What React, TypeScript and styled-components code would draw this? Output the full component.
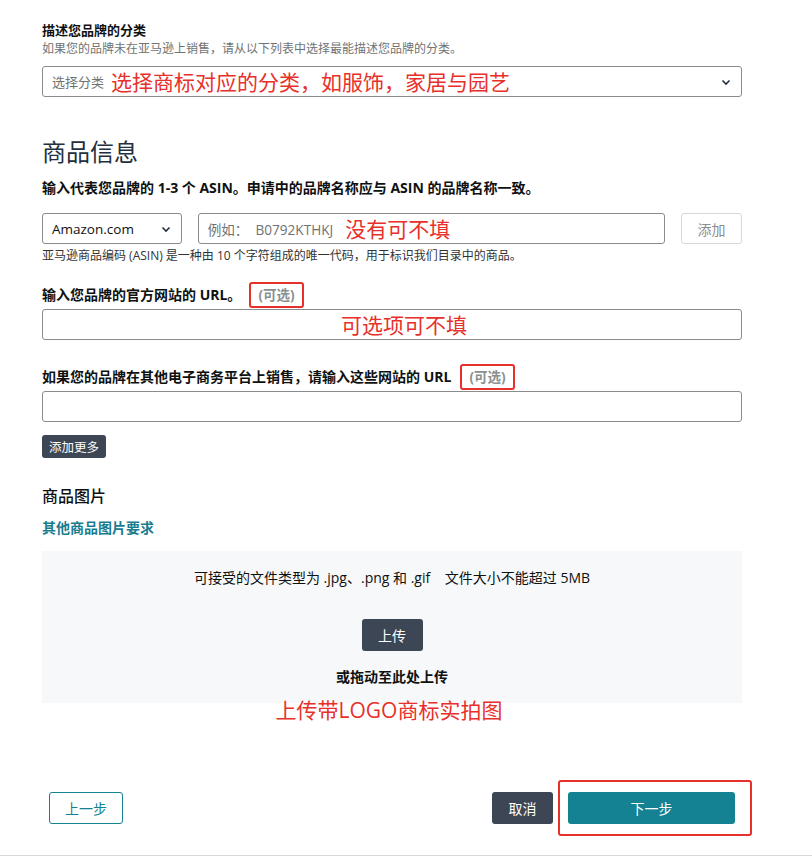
import styled, { createGlobalStyle } from 'styled-components';

const GlobalStyle = createGlobalStyle`
  body {
    margin: 0;
    background: #ffffff;
    font-family: "Open Sans", "Noto Sans CJK SC", sans-serif;
    color: #0f1111;
  }
`;

const Page = styled.div`
  width: 812px;
  height: 856px;
  display: flex;
  flex-direction: column;
  box-sizing: border-box;
`;

const Content = styled.div`
  flex: 1;
  display: flex;
  flex-direction: column;
  width: 700px;
  padding: 21px 0 0 42px;
`;

const FieldLabel = styled.div<{ $top?: number }>`
  display: flex;
  align-items: center;
  margin-top: ${(p) => p.$top ?? 0}px;
  font-size: 14px;
  font-weight: 700;
  line-height: 26px;
  height: 26px;
  color: #0f1111;
  white-space: nowrap;
`;

const SmallTitle = styled.div`
  font-size: 13px;
  font-weight: 700;
  line-height: 19px;
  color: #0f1111;
`;

const Hint = styled.div<{ $top?: number; $dark?: boolean }>`
  margin-top: ${(p) => p.$top ?? 0}px;
  font-size: 12px;
  line-height: 18px;
  color: ${(p) => (p.$dark ? '#333' : '#6f7373')};
  white-space: nowrap;
`;

const Optional = styled.span<{ $gap: number }>`
  margin-left: ${(p) => p.$gap}px;
  padding: 0 7px;
  height: 22px;
  line-height: 22px;
  border: 2px solid #e8302a;
  border-radius: 3px;
  color: #8a9090;
  font-weight: 700;
  font-size: 13.5px;
`;

const Box = styled.div<{ $top?: number; $width?: string }>`
  position: relative;
  display: flex;
  align-items: center;
  box-sizing: border-box;
  width: ${(p) => p.$width ?? '100%'};
  height: 31px;
  margin-top: ${(p) => p.$top ?? 0}px;
  padding: 0 9px;
  border: 1px solid #888c8c;
  border-radius: 3px;
  background: #fff;
  font-size: 13px;
`;

const Placeholder = styled.span<{ $size?: number }>`
  color: #6f7373;
  font-size: ${(p) => p.$size ?? 13}px;
  white-space: pre;
`;

const Value = styled.span`
  color: #0f1111;
  font-size: 13.5px;
`;

const Note = styled.span<{ $left?: number }>`
  margin-left: ${(p) => p.$left ?? 0}px;
  color: #e8302a;
  font-size: 21px;
  line-height: 26px;
  white-space: nowrap;
`;

const Chevron = styled.svg`
  margin-left: auto;
  width: 12px;
  height: 12px;
`;

const Heading = styled.h2`
  margin: 39px 0 0;
  font-size: 24px;
  font-weight: 400;
  line-height: 32px;
  color: #232f3e;
`;

const SubHeading = styled.h3`
  margin: 26px 0 0;
  font-size: 16px;
  font-weight: 500;
  line-height: 24px;
  color: #0f1111;
`;

const AsinRow = styled.div`
  display: flex;
  gap: 16px;
  margin-top: 12px;
`;

const Button = styled.button<{ $variant: 'dark' | 'light' | 'primary' | 'outline'; $size?: number }>`
  box-sizing: border-box;
  display: inline-flex;
  align-items: center;
  justify-content: center;
  border-radius: 3px;
  font-family: inherit;
  font-size: ${(p) => p.$size ?? 14}px;
  padding: 0;
  cursor: pointer;
  white-space: nowrap;
  border: 1px solid
    ${(p) =>
      p.$variant === 'light'
        ? '#d5d9d9'
        : p.$variant === 'outline'
        ? '#148292'
        : 'transparent'};
  background: ${(p) =>
    p.$variant === 'dark'
      ? '#3c4654'
      : p.$variant === 'primary'
      ? '#148292'
      : '#fff'};
  color: ${(p) =>
    p.$variant === 'light'
      ? '#8a8e8e'
      : p.$variant === 'outline'
      ? '#148292'
      : '#fff'};
`;

const LinkText = styled.a`
  margin-top: 11px;
  font-size: 14px;
  font-weight: 700;
  line-height: 18px;
  color: #1a7d8f;
  text-decoration: none;
`;

const DropZone = styled.div`
  display: flex;
  flex-direction: column;
  align-items: center;
  box-sizing: border-box;
  height: 152px;
  margin-top: 14px;
  padding-top: 18px;
  background: #f7f8f9;
  font-size: 14px;
  line-height: 18px;
`;

const DropText = styled.div<{ $bold?: boolean; $top?: number }>`
  margin-top: ${(p) => p.$top ?? 0}px;
  font-weight: ${(p) => (p.$bold ? 700 : 400)};
  color: #0f1111;
  white-space: pre;
`;

const Footer = styled.div`
  display: flex;
  align-items: center;
  margin-top: 69px;
  padding: 0 7px;
`;

const Actions = styled.div`
  margin-left: auto;
  display: flex;
  gap: 15px;
`;

const Highlight = styled.div`
  position: relative;

  &::after {
    content: '';
    position: absolute;
    inset: -12px -17px -12px -10px;
    border: 2px solid #e8302a;
    border-radius: 3px;
  }
`;

const BottomLine = styled.div`
  height: 1px;
  margin-top: 31px;
  background: #d5d9d9;
`;

function Caret() {
  return (
    <Chevron viewBox="0 0 12 12">
      <path d="M2.5 4.5 6 8l3.5-3.5" fill="none" stroke="#232f3e" strokeWidth="1.6" />
    </Chevron>
  );
}

function App() {
  return (
    <Page>
      <GlobalStyle />
      <Content>
        <SmallTitle>描述您品牌的分类</SmallTitle>
        <Hint>如果您的品牌未在亚马逊上销售，请从以下列表中选择最能描述您品牌的分类。</Hint>
        <Box $top={8}>
          <Placeholder>选择分类</Placeholder>
          <Note $left={7}>选择商标对应的分类，如服饰，家居与园艺</Note>
          <Caret />
        </Box>

        <Heading>商品信息</Heading>
        <FieldLabel $top={7}>输入代表您品牌的 1-3 个 ASIN。申请中的品牌名称应与 ASIN 的品牌名称一致。</FieldLabel>
        <AsinRow>
          <Box $width="140px">
            <Value>Amazon.com</Value>
            <Caret />
          </Box>
          <Box $width="469px">
            <Placeholder $size={13.6}>例如：  B0792KTHKJ</Placeholder>
            <Note $left={12}>没有可不填</Note>
          </Box>
          <Button $variant="light" style={{ width: 61, height: 31 }}>
            添加
          </Button>
        </AsinRow>
        <Hint $top={3} $dark style={{ lineHeight: '17px' }}>
          亚马逊商品编码 (ASIN) 是一种由 10 个字符组成的唯一代码，用于标识我们目录中的商品。
        </Hint>

        <FieldLabel $top={18}>
          输入您品牌的官方网站的 URL。
          <Optional $gap={8}>(可选)</Optional>
        </FieldLabel>
        <Box $top={1}>
          <Note $left={289}>可选项可不填</Note>
        </Box>

        <FieldLabel $top={24}>
          如果您的品牌在其他电子商务平台上销售，请输入这些网站的 URL
          <Optional $gap={9}>(可选)</Optional>
        </FieldLabel>
        <Box $top={1} />
        <div>
          <Button $variant="dark" $size={12.5} style={{ width: 64, height: 23, marginTop: 13 }}>
            添加更多
          </Button>
        </div>

        <SubHeading>商品图片</SubHeading>
        <LinkText href="#">其他商品图片要求</LinkText>
        <DropZone>
          <DropText>可接受的文件类型为 .jpg、.png 和 .gif    文件大小不能超过 5MB</DropText>
          <Button $variant="dark" style={{ width: 61, height: 32, marginTop: 32 }}>
            上传
          </Button>
          <DropText $bold $top={17}>或拖动至此处上传</DropText>
        </DropZone>
        <Note style={{ marginTop: -6, textAlign: 'center', marginLeft: -6 }}>上传带LOGO商标实拍图</Note>

        <Footer>
          <Button $variant="outline" style={{ width: 74, height: 32 }}>
            上一步
          </Button>
          <Actions>
            <Button $variant="dark" style={{ width: 61, height: 32 }}>
              取消
            </Button>
            <Highlight>
              <Button $variant="primary" style={{ width: 167, height: 32 }}>
                下一步
              </Button>
            </Highlight>
          </Actions>
        </Footer>
      </Content>
      <BottomLine />
    </Page>
  );
}

export default App;
